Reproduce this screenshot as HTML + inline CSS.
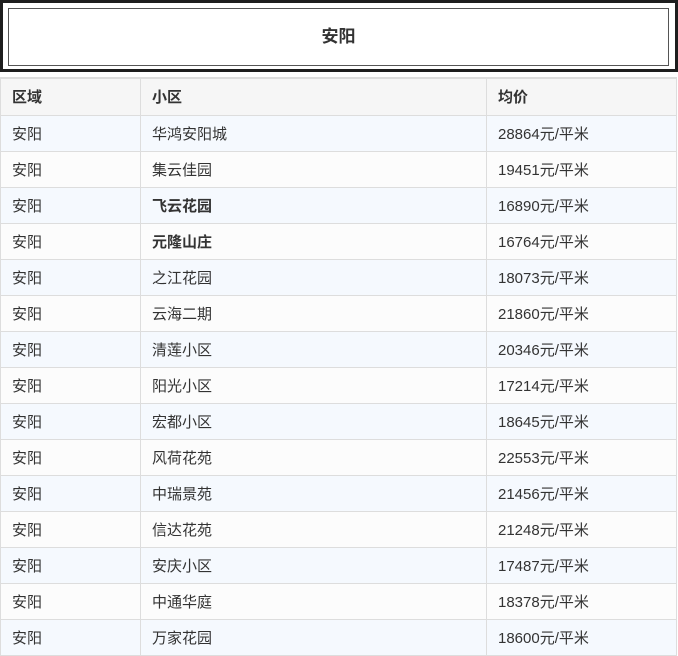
<!DOCTYPE html>
<html><head><meta charset="utf-8"><style>
*{margin:0;padding:0;box-sizing:border-box}
body{width:678px;height:655px;overflow:hidden;background:#fff;font-family:"Liberation Sans","Noto Sans CJK SC",sans-serif;color:#333}
.top{position:absolute;left:0;top:0;width:678px;height:72px;border:3px solid #1e1e1e;background:#fff}
.inner{position:absolute;left:5px;top:5px;width:661px;height:58px;border:1px solid #555;text-align:center;line-height:56px;font-size:17px;font-weight:bold;color:#333}
table{position:absolute;left:0;top:77px;width:677px;border-collapse:collapse;font-size:15px;border-top:2px solid #ddd}
td,th{border:1px solid #ddd;height:36px;padding:0 11px;text-align:left;white-space:nowrap}
th{background:#f6f6f6;font-weight:bold;height:37px}
tr:nth-child(odd) td{background:#f5f9fe}
tr:nth-child(even) td{background:#fcfcfc}
.b{font-weight:bold}
</style></head><body>
<div class="top"><div class="inner">安阳</div></div>
<table>
<thead><tr><th style="width:140px">区域</th><th style="width:346px">小区</th><th>均价</th></tr></thead>
<tbody>
<tr><td>安阳</td><td>华鸿安阳城</td><td>28864元/平米</td></tr>
<tr><td>安阳</td><td>集云佳园</td><td>19451元/平米</td></tr>
<tr><td>安阳</td><td class="b">飞云花园</td><td>16890元/平米</td></tr>
<tr><td>安阳</td><td class="b">元隆山庄</td><td>16764元/平米</td></tr>
<tr><td>安阳</td><td>之江花园</td><td>18073元/平米</td></tr>
<tr><td>安阳</td><td>云海二期</td><td>21860元/平米</td></tr>
<tr><td>安阳</td><td>清莲小区</td><td>20346元/平米</td></tr>
<tr><td>安阳</td><td>阳光小区</td><td>17214元/平米</td></tr>
<tr><td>安阳</td><td>宏都小区</td><td>18645元/平米</td></tr>
<tr><td>安阳</td><td>风荷花苑</td><td>22553元/平米</td></tr>
<tr><td>安阳</td><td>中瑞景苑</td><td>21456元/平米</td></tr>
<tr><td>安阳</td><td>信达花苑</td><td>21248元/平米</td></tr>
<tr><td>安阳</td><td>安庆小区</td><td>17487元/平米</td></tr>
<tr><td>安阳</td><td>中通华庭</td><td>18378元/平米</td></tr>
<tr><td>安阳</td><td>万家花园</td><td>18600元/平米</td></tr>
</tbody></table>
</body></html>
